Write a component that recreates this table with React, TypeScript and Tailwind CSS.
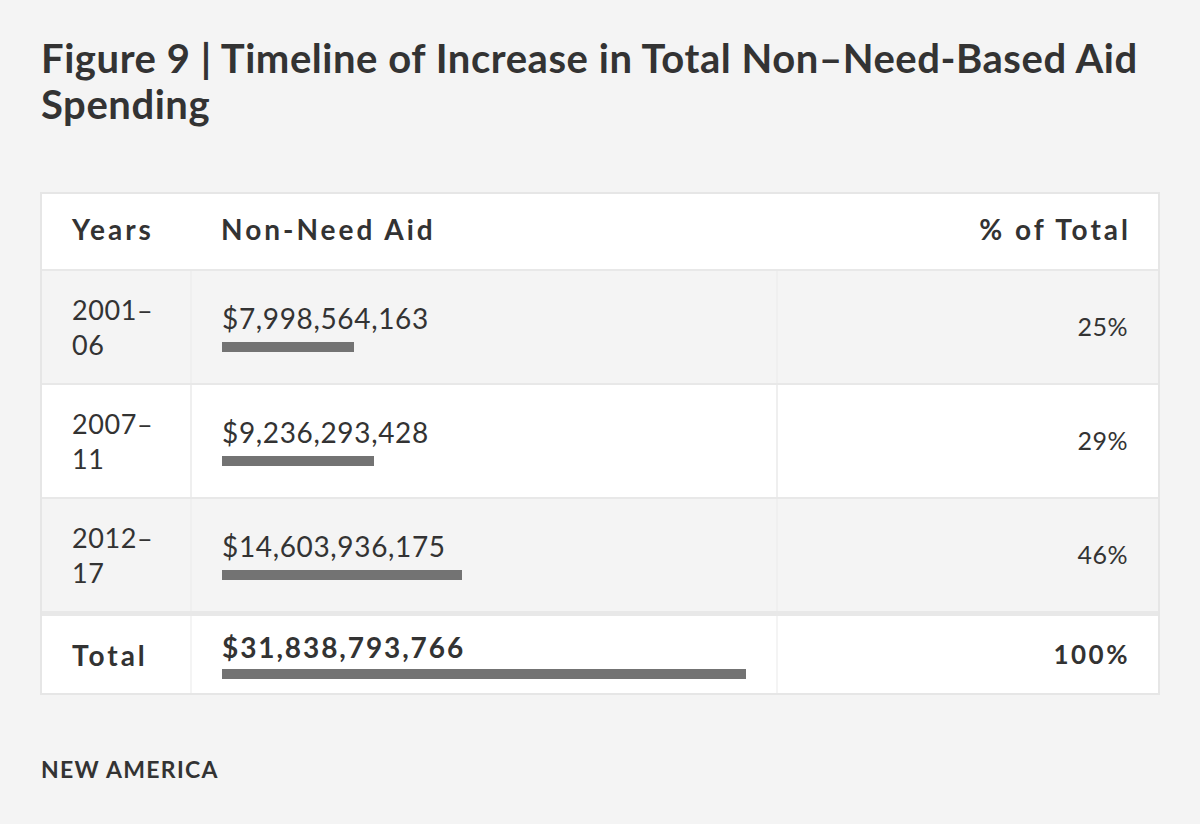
import React from "react";

const rows = [
  { y1: "2001–", y2: "06", amt: "$7,998,564,163", w: 132, pct: "25%", bg: "bg-[#f4f4f4]" },
  { y1: "2007–", y2: "11", amt: "$9,236,293,428", w: 152, pct: "29%", bg: "bg-white" },
  { y1: "2012–", y2: "17", amt: "$14,603,936,175", w: 240, pct: "46%", bg: "bg-[#f4f4f4]" },
];

export default function App() {
  return (
    <div className="w-[1200px] h-[824px] bg-[#f4f4f4] text-[#333333] font-['Lato',_sans-serif] pt-[35px] px-[40px]">
      <h1 className="font-bold text-[40px] leading-[46px] tracking-[0.55px] pl-[1px]">
        Figure 9 | Timeline of Increase in Total Non–Need-Based Aid Spending
      </h1>
      <div className="mt-[65px] border-2 border-[#e6e6e6] bg-white">
        <div className="flex h-[77px] items-center pb-[5px] bg-white text-[28px] font-bold tracking-[3px] border-b-2 border-[#e8e8e8]">
          <div className="w-[150px] pl-[30px]">Years</div>
          <div className="w-[585px] pl-[29px]">Non-Need Aid</div>
          <div className="flex-1 text-right pr-[27px]">% of Total</div>
        </div>
        {rows.map((r, i) => (
          <div
            key={i}
            className={`flex border-[#e8e8e8] ${r.bg} ${i === 2 ? "border-b-[5px] h-[117px]" : "border-b-2 h-[114px]"}`}
          >
            <div className="w-[148px] pl-[30px] flex flex-col justify-center text-[27px] leading-[35px] tracking-[0.6px]">
              <div>{r.y1}</div>
              <div>{r.y2}</div>
            </div>
            <div className="w-[586px] border-l-2 border-[#efefef] pl-[30px] flex flex-col justify-center">
              <div className="text-[28px] leading-[32px] tracking-[0.65px]">{r.amt}</div>
              <div className="mt-[8px] h-[10px] bg-[#737373]" style={{ width: r.w }} />
            </div>
            <div className="flex-1 border-l-2 border-[#efefef] pr-[30px] flex items-center justify-end text-[25px] tracking-[0.5px]">
              {r.pct}
            </div>
          </div>
        ))}
        <div className="flex h-[77px] bg-white">
          <div className="w-[148px] pl-[30px] flex items-center text-[28px] font-bold tracking-[3px]">Total</div>
          <div className="w-[586px] border-l-2 border-[#f4f4f4] pl-[30px] flex flex-col justify-center">
            <div className="text-[28px] leading-[32px] font-bold tracking-[1.9px]">$31,838,793,766</div>
            <div className="mt-[6px] h-[10px] bg-[#737373] w-[524px]" />
          </div>
          <div className="flex-1 border-l-2 border-[#f4f4f4] pr-[28px] flex items-center justify-end text-[26px] font-bold tracking-[2.5px]">
            100%
          </div>
        </div>
      </div>
      <div className="mt-[57px] pl-[1px] text-[23px] font-bold tracking-[1.3px]">NEW AMERICA</div>
    </div>
  );
}
